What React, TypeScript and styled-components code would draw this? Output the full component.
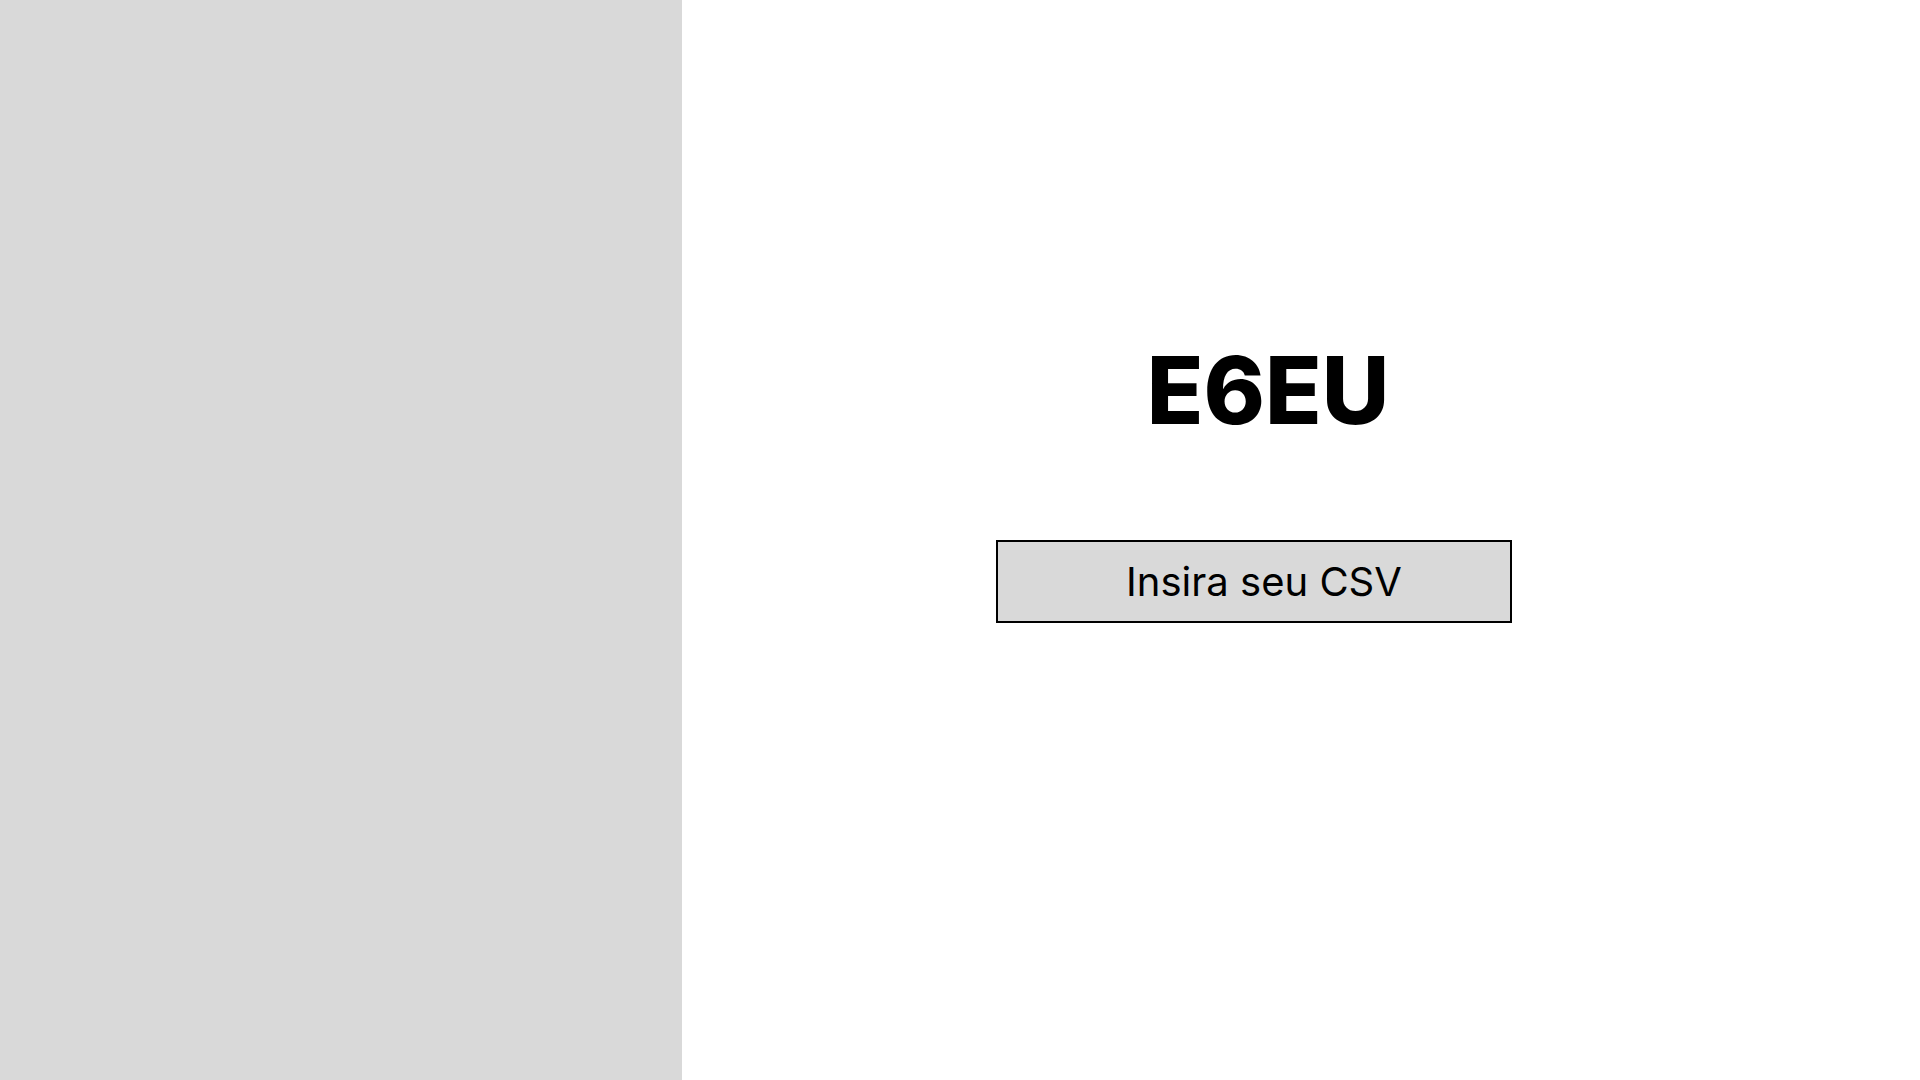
import React from 'react';
import styled, { createGlobalStyle } from 'styled-components';

const GlobalStyle = createGlobalStyle`
  html, body, #root {
    margin: 0;
    padding: 0;
    height: 100%;
  }
  body {
    font-family: Inter, "Noto Sans", sans-serif;
    background: #ffffff;
    color: #000000;
  }
`;

const App = () => {
  return (
    <>
      <GlobalStyle />
      <Layout>
        <SidePanel />
        <Main>
          <Title>E6EU</Title>
          <UploadButton type="button">Insira seu CSV</UploadButton>
        </Main>
      </Layout>
    </>
  );
};

export default App;

const Layout = styled.div`
  display: grid;
  grid-template-columns: 682px 1fr;
  width: 100%;
  height: 100vh;
`;

const SidePanel = styled.aside`
  background: #d9d9d9;
`;

const Main = styled.main`
  display: flex;
  flex-direction: column;
  align-items: center;
  padding: 344px 66px 0 0;
  box-sizing: border-box;
`;

const Title = styled.h1`
  font: 800 93px/1 Inter, sans-serif;
  margin: 0;
  letter-spacing: 0;
`;

const UploadButton = styled.button`
  box-sizing: border-box;
  width: 516px;
  height: 83px;
  margin: 103px 28px 0 0;
  padding: 0 0 0 20px;
  background: #d9d9d9;
  border: 2px solid #000000;
  border-radius: 0;
  font: 400 40px Inter, sans-serif;
  color: #000000;
  cursor: pointer;
`;
